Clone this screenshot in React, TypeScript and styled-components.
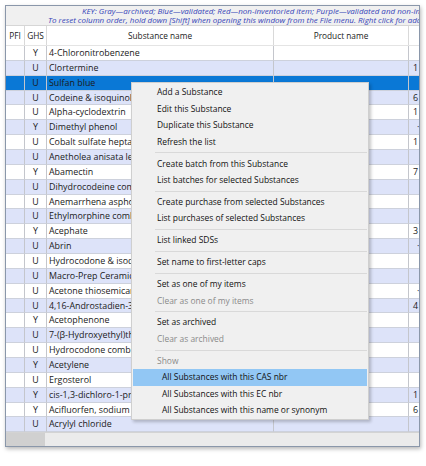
import React from 'react';
import styled, { createGlobalStyle } from 'styled-components';

const GlobalStyle = createGlobalStyle`
    html, body {
        margin: 0;
        padding: 0;
        background: #ffffff;
    }
    body {
        font-family: "Open Sans", "Noto Sans", sans-serif;
        color: #1a1a1a;
    }
`;

// PFI | GHS | Substance name | Product name | (next column, cut off)
const COLUMNS = '19px 22px 227px 135px 1fr';

const Page = styled.div`
    width: 426px;
    height: 466px;
    box-sizing: border-box;
    padding: 5px 0 0 5px;
`;

const Window = styled.div`
    position: relative;
    width: 415px;
    height: 442px;
    box-sizing: border-box;
    border: 1px solid #8a97aa;
    box-shadow: 1px 2px 4px rgba(0, 0, 0, 0.28);
    background: #ffffff;
    display: flex;
    flex-direction: column;
    overflow: hidden;
`;

const Key = styled.div`
    height: 19px;
    flex-shrink: 0;
    background: #f0f0f0;
    font-size: 8px;
    font-style: italic;
    line-height: 9px;
    color: #3544b8;
    white-space: nowrap;
    overflow: hidden;
`;

const KeyLine = styled.div<{ $indent: number }>`
    padding-left: ${(p) => p.$indent}px;
`;

const HeaderRow = styled.div`
    display: grid;
    grid-template-columns: ${COLUMNS};
    height: 21px;
    flex-shrink: 0;
    box-sizing: border-box;
    border-top: 1px solid #d6d6d6;
    border-bottom: 1px solid #e4e4e4;
`;

const HeaderCell = styled.div`
    border-right: 1px solid #d9d9d9;
    font-size: 8.3px;
    line-height: 19px;
    text-align: center;
    color: #222222;
    white-space: nowrap;
    overflow: hidden;

    &:last-child {
        border-right: none;
    }
`;

const Body = styled.div`
    display: grid;
    grid-auto-rows: 14.87px;
    flex-shrink: 0;
`;

type Tone = 'plain' | 'tint' | 'selected';

const toneColor: Record<Tone, string> = {
    plain: '#ffffff',
    tint: '#dde3f9',
    selected: '#0a78d6',
};

const Row = styled.div<{ $tone: Tone }>`
    display: grid;
    grid-template-columns: ${COLUMNS};
    background: ${(p) => toneColor[p.$tone]};
`;

const Cell = styled.div<{ $align?: 'left' | 'center'; $pad?: number }>`
    box-sizing: border-box;
    border-right: 1px solid #c4c6cc;
    border-bottom: 1px solid #cdd1dc;
    padding-left: ${(p) => p.$pad ?? 0}px;
    text-align: ${(p) => p.$align ?? 'left'};
    font-size: 8.9px;
    line-height: 14px;
    white-space: nowrap;
    overflow: hidden;

    &:last-child {
        border-right: none;
    }
`;

const HScroll = styled.div`
    flex: 1;
    display: flex;
    background: #ebebeb;
    border-top: 1px solid #d3d3d3;
`;

const HThumb = styled.div`
    width: 39px;
    background: #d0d0d0;
`;

const Menu = styled.div`
    position: absolute;
    left: 125px;
    top: 76px;
    width: 238px;
    height: 338px;
    box-sizing: border-box;
    padding-top: 1px;
    background: #f0f0f0;
    border: 1px solid #cfcfcf;
    box-shadow: 2px 2px 3px rgba(0, 0, 0, 0.22);
    display: flex;
    flex-direction: column;
`;

const MenuItem = styled.div<{ $disabled?: boolean; $active?: boolean; $indent?: boolean }>`
    height: 16.55px;
    margin: 0 1px 0 1px;
    padding-left: ${(p) => (p.$indent ? 29 : 24)}px;
    font-size: 8.45px;
    line-height: 16.55px;
    white-space: nowrap;
    color: ${(p) => (p.$disabled ? '#8a8a8a' : '#111111')};
    background: ${(p) => (p.$active ? '#92c7f4' : 'transparent')};
`;

const MenuSeparator = styled.div`
    height: 5.5px;
    margin: 0 1px 0 23px;
    display: flex;
    align-items: center;

    &::after {
        content: '';
        flex: 1;
        height: 1px;
        background: #d9d9d9;
    }
`;

type Substance = [ghs: string, name: string, extra?: string];

const substances: Substance[] = [
    ['Y', '4-Chloronitrobenzene'],
    ['U', 'Clortermine', '1'],
    ['U', 'Sulfan blue'],
    ['U', 'Codeine & isoquinoline alkaloid combination', '6'],
    ['U', 'Alpha-cyclodextrin', '1'],
    ['Y', 'Dimethyl phenol', '·'],
    ['U', 'Cobalt sulfate heptahydrate', '1'],
    ['U', 'Anetholea anisata leaf oil'],
    ['Y', 'Abamectin', '7'],
    ['U', 'Dihydrocodeine combination product'],
    ['U', 'Anemarrhena asphodeloides extract'],
    ['U', 'Ethylmorphine combination product'],
    ['Y', 'Acephate', '3'],
    ['U', 'Abrin', '·'],
    ['U', 'Hydrocodone & isoquinoline alkaloid'],
    ['U', 'Macro-Prep Ceramic Hydroxyapatite'],
    ['U', 'Acetone thiosemicarbazone', '·'],
    ['U', '4,16-Androstadien-3-one', '4'],
    ['Y', 'Acetophenone'],
    ['U', '7-(β-Hydroxyethyl)theophylline'],
    ['U', 'Hydrocodone combination product'],
    ['Y', 'Acetylene'],
    ['U', 'Ergosterol'],
    ['Y', 'cis-1,3-dichloro-1-propene', '1'],
    ['Y', 'Acifluorfen, sodium salt', '6'],
    ['U', 'Acrylyl chloride'],
];

const SELECTED_ROW = 2;

type MenuEntry =
    | { kind: 'item'; label: string; disabled?: boolean; active?: boolean; indent?: boolean }
    | { kind: 'sep' };

const item = (label: string, opts: Partial<{ disabled: boolean; active: boolean; indent: boolean }> = {}): MenuEntry => ({
    kind: 'item',
    label,
    ...opts,
});
const sep: MenuEntry = { kind: 'sep' };

const menuEntries: MenuEntry[] = [
    item('Add a Substance'),
    item('Edit this Substance'),
    item('Duplicate this Substance'),
    item('Refresh the list'),
    sep,
    item('Create batch from this Substance'),
    item('List batches for selected Substances'),
    sep,
    item('Create purchase from selected Substances'),
    item('List purchases of selected Substances'),
    sep,
    item('List linked SDSs'),
    sep,
    item('Set name to first-letter caps'),
    sep,
    item('Set as one of my items'),
    item('Clear as one of my items', { disabled: true }),
    sep,
    item('Set as archived'),
    item('Clear as archived', { disabled: true }),
    sep,
    item('Show', { disabled: true }),
    item('All Substances with this CAS nbr', { indent: true, active: true }),
    item('All Substances with this EC nbr', { indent: true }),
    item('All Substances with this name or synonym', { indent: true }),
];

const rowTone = (index: number): Tone => {
    if (index === SELECTED_ROW) return 'selected';
    return index % 2 === 1 ? 'tint' : 'plain';
};

const App: React.FC = () => {
    return (
        <Page>
            <GlobalStyle />
            <Window>
                <Key>
                    <KeyLine $indent={76}>
                        KEY: Gray—archived; Blue—validated; Red—non-inventoried item; Purple—validated and non-inventoried item
                    </KeyLine>
                    <KeyLine $indent={42}>
                        To reset column order, hold down [Shift] when opening this window from the File menu. Right click for additional options.
                    </KeyLine>
                </Key>
                <HeaderRow>
                    <HeaderCell>PFI</HeaderCell>
                    <HeaderCell>GHS</HeaderCell>
                    <HeaderCell>Substance name</HeaderCell>
                    <HeaderCell>Product name</HeaderCell>
                    <HeaderCell />
                </HeaderRow>
                <Body>
                    {substances.map(([ghs, name, extra], i) => (
                        <Row key={name} $tone={rowTone(i)}>
                            <Cell />
                            <Cell $align="center">{ghs}</Cell>
                            <Cell $pad={2}>{name}</Cell>
                            <Cell />
                            <Cell $pad={extra === '·' ? 8 : 4}>{extra}</Cell>
                        </Row>
                    ))}
                </Body>
                <HScroll>
                    <HThumb />
                </HScroll>
                <Menu>
                    {menuEntries.map((entry, i) =>
                        entry.kind === 'sep' ? (
                            <MenuSeparator key={i} />
                        ) : (
                            <MenuItem
                                key={i}
                                $disabled={entry.disabled}
                                $active={entry.active}
                                $indent={entry.indent}
                            >
                                {entry.label}
                            </MenuItem>
                        )
                    )}
                </Menu>
            </Window>
        </Page>
    );
};

export default App;
